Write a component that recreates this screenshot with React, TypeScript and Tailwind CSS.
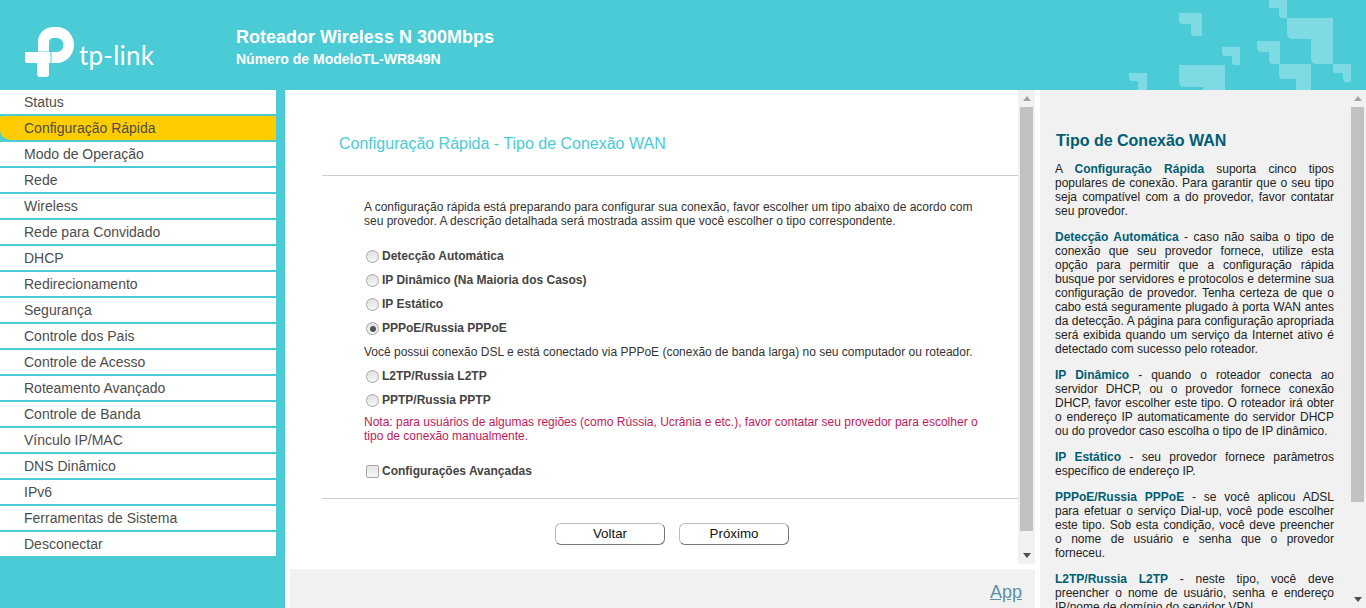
import React from "react";

const nav = ["Status","Configuração Rápida","Modo de Operação","Rede","Wireless","Rede para Convidado","DHCP","Redirecionamento","Segurança","Controle dos Pais","Controle de Acesso","Roteamento Avançado","Controle de Banda","Vínculo IP/MAC","DNS Dinâmico","IPv6","Ferramentas de Sistema","Desconectar"];

function Radio({ on }: { on?: boolean }) {
  return (
    <span className="mt-[1px] w-[13px] h-[13px] rounded-full border border-[#a6a6a6] bg-gradient-to-b from-[#e0e0e0] to-[#f6f6f6] flex items-center justify-center shrink-0">
      {on && <span className="w-[6px] h-[6px] rounded-full bg-[#555]" />}
    </span>
  );
}

function Opt({ label, on }: { label: string; on?: boolean }) {
  return (
    <div className="h-6 flex items-center gap-[3px] pl-[2px] font-bold text-[#444]">
      <Radio on={on} />
      <span>{label}</span>
    </div>
  );
}

function Scrollbar({ thumb }: { thumb: string }) {
  return (
    <div className="w-[17px] shrink-0 flex flex-col items-center bg-[#f1f1f1]">
      <div className="h-[17px] flex items-center justify-center shrink-0">
        <span className="w-0 h-0 border-x-[4.5px] border-x-transparent border-b-[5px] border-b-[#a3a3a3]" />
      </div>
      <div className={`w-[13px] bg-[#c1c1c1] ${thumb}`} />
    </div>
  );
}

function Deco() {
  const f = "#7fdbe3";
  const big = "M0 0H46V46H30Q24 46 24 40V21H6Q0 21 0 15Z";
  const mid = "M0 0H23V23H16Q12 23 12 19V11H4Q0 11 0 7Z";
  const sm = "M0 0H18V18H13Q10 18 10 15V9H3Q0 9 0 6Z";
  return (
    <svg className="absolute inset-0" width="1366" height="90" viewBox="0 0 1366 90" aria-hidden="true">
      <g fill={f}>
        <path d={mid} transform="translate(1179 13)" />
        <path d={sm} transform="translate(1222 47)" />
        <path d={big} transform="translate(1287 18)" />
        <path d={mid} transform="translate(1257 41)" />
        <path d="M0 0H18V18H13Q10 18 10 15V8H2Q0 8 0 6Z" transform="translate(1269 0)" />
        <path d="M0 0H32V26H17V15H4Q0 15 0 11Z" transform="translate(1279 64)" />
        <path d={sm} transform="translate(1333 64)" />
        <path d="M0 0H46V25H24V22H6Q0 22 0 16Z" transform="translate(1179 65)" />
        <path d="M0 0H18V17H9V8H3Q0 8 0 5Z" transform="translate(1129 73)" />
      </g>
    </svg>
  );
}

function Logo() {
  return (
    <div className="flex items-end absolute left-[25px] top-[27px]">
      <svg width="49" height="50" viewBox="0 0 49 50" aria-hidden="true">
        <path fill="#fff" d="M13 24.5V15C13 6.5 20 0 28 0H32C41.5 0 49 8 49 18C49 28 41 36 32 36H26.5V25H32C35.5 25 38.5 22 38.5 18C38.5 14 35.5 11 32 11H28C26 11 24 13 24 15V24.5Z" />
        <path fill="#fff" d="M0 25H25.5V36H24V47C24 49 23 50 21 50H15C13.5 50 12 49 12 47V36H2C1 36 0 35 0 34Z" />
      </svg>
      <span className="ml-[5px] mb-[8px] text-white text-[26px] leading-[28px] font-['Lato',sans-serif] font-normal tracking-[0.2px]">tp-link</span>
    </div>
  );
}

export default function App() {
  return (
    <div className="w-[1366px] h-[608px] overflow-hidden flex flex-col bg-white text-[12px] text-[#333] font-['Liberation_Sans',Arial,sans-serif]">
      <header className="relative h-[90px] shrink-0 bg-[#4acbd6] pl-[236px] pt-[26px] text-white font-bold">
        <Deco />
        <Logo />
        <div className="relative text-[18px] leading-[22px]">Roteador Wireless N 300Mbps</div>
        <div className="relative text-[14px] leading-[20px] mt-[1px]">Número de ModeloTL-WR849N</div>
      </header>
      <div className="flex flex-1 min-h-0">
        <nav className="w-[285px] shrink-0 bg-[#4acbd6] pr-[9px] flex flex-col gap-[2px]">
          {nav.map((n, i) => (
            <div key={n} className={`h-6 shrink-0 pl-6 text-[14px] leading-6 text-[#4d4d4d] ${i === 1 ? "bg-[#ffcc00] rounded-bl-[10px] rounded-tl-[2px]" : "bg-white"}`}>{n}</div>
          ))}
        </nav>
        <div className="w-[755px] shrink-0 flex flex-col">
          <div className="w-[750px] h-[474px] flex shrink-0">
            <main className="w-[733px] pl-[37px] overflow-hidden">
              <h1 className="pl-[17px] pt-[44px] text-[16px] leading-[19px] text-[#4acbd6] font-normal h-[85px]">Configuração Rápida - Tipo de Conexão WAN</h1>
              <div className="h-px bg-[#ccc]" />
              <div className="pl-[42px] pr-[40px] pt-[24px]">
                <p className="leading-[14px] mb-[16px]">A configuração rápida está preparando para configurar sua conexão, favor escolher um tipo abaixo de acordo com seu provedor. A descrição detalhada será mostrada assim que você escolher o tipo correspondente.</p>
                <Opt label="Detecção Automática" />
                <Opt label="IP Dinâmico (Na Maioria dos Casos)" />
                <Opt label="IP Estático" />
                <Opt label="PPPoE/Russia PPPoE" on />
                <div className="h-6 leading-6">Você possui conexão DSL e está conectado via PPPoE (conexão de banda larga) no seu computador ou roteador.</div>
                <Opt label="L2TP/Russia L2TP" />
                <Opt label="PPTP/Russia PPTP" />
                <p className="text-[#c2185b] leading-[14px] mt-[3px]">Nota: para usuários de algumas regiões (como Rússia, Ucrânia e etc.), favor contatar seu provedor para escolher o tipo de conexão manualmente.</p>
                <div className="mt-[16px] h-6 flex items-center gap-[3px] pl-[2px] font-bold text-[#444]">
                  <span className="mt-[1px] w-[13px] h-[13px] rounded-[2px] border border-[#a6a6a6] bg-gradient-to-b from-[#e6e6e6] to-[#f6f6f6] shrink-0" />
                  <span>Configurações Avançadas</span>
                </div>
              </div>
              <div className="h-px bg-[#ccc] mt-[15px]" />
              <div className="flex justify-center gap-[14px] pt-[24px] pl-[4px]">
                <button className="w-[110px] h-[22px] bg-white border border-[#bbb] border-r-[#777] border-b-[#777] rounded-[6px] text-[13.33px] leading-[20px] text-[#111]">Voltar</button>
                <button className="w-[110px] h-[22px] bg-white border border-[#bbb] border-r-[#777] border-b-[#777] rounded-[6px] text-[13.33px] leading-[20px] text-[#111]">Próximo</button>
              </div>
            </main>
            <div className="relative w-[17px] shrink-0 bg-[#f1f1f1] flex flex-col items-center">
              <Scrollbar thumb="h-[424px]" />
              <div className="absolute bottom-[6px] w-0 h-0 border-x-[4.5px] border-x-transparent border-t-[5px] border-t-[#505050]" />
            </div>
          </div>
          <div className="mx-[5px] mt-[5px] flex-1 bg-[#f1f1f1] flex justify-end pr-[13px] pt-[14px]">
            <a className="text-[18px] leading-[19px] underline text-[#5a8fa8]">App</a>
          </div>
        </div>
        <aside className="relative flex-1 bg-[#f1f1f1] flex min-w-0">
          <div className="flex-1 pl-[15px] pr-[15px] pt-[41px] text-[#222] overflow-hidden">
            <h2 className="ml-[1px] text-[16px] leading-[20px] font-bold text-[#005e74] mb-[11px]">Tipo de Conexão WAN</h2>
            <div className="text-justify leading-[14px] [&_p]:mb-[12px] [&_b]:text-[#005e74]">
              <p>A <b>Configuração Rápida</b> suporta cinco tipos populares de conexão. Para garantir que o seu tipo seja compatível com a do provedor, favor contatar seu provedor.</p>
              <p><b>Detecção Automática</b> - caso não saiba o tipo de conexão que seu provedor fornece, utilize esta opção para permitir que a configuração rápida busque por servidores e protocolos e determine sua configuração de provedor. Tenha certeza de que o cabo está seguramente plugado à porta WAN antes da detecção. A página para configuração apropriada será exibida quando um serviço da Internet ativo é detectado com sucesso pelo roteador.</p>
              <p><b>IP Dinâmico</b> - quando o roteador conecta ao servidor DHCP, ou o provedor fornece conexão DHCP, favor escolher este tipo. O roteador irá obter o endereço IP automaticamente do servidor DHCP ou do provedor caso escolha o tipo de IP dinâmico.</p>
              <p><b>IP Estático</b> - seu provedor fornece parâmetros específico de endereço IP.</p>
              <p><span className="block [text-align-last:justify]"><b>PPPoE/Russia PPPoE</b> - se você aplicou ADSL</span><span className="block [text-align-last:justify]">para efetuar o serviço Dial-up, você pode escolher</span><span className="block [text-align-last:justify]">este tipo. Sob esta condição, você deve preencher</span><span className="block [text-align-last:justify]">o nome de usuário e senha que o provedor</span>forneceu.</p>
              <p><span className="block [text-align-last:justify]"><b>L2TP/Russia L2TP</b> - neste tipo, você deve</span><span className="block [text-align-last:justify]">preencher o nome de usuário, senha e endereço</span>IP/nome de domínio do servidor VPN.</p>
            </div>
          </div>
          <Scrollbar thumb="h-[395px]" />
          <div className="absolute right-[4px] bottom-[6px] w-0 h-0 border-x-[4.5px] border-x-transparent border-t-[5px] border-t-[#505050]" />
        </aside>
      </div>
    </div>
  );
}
